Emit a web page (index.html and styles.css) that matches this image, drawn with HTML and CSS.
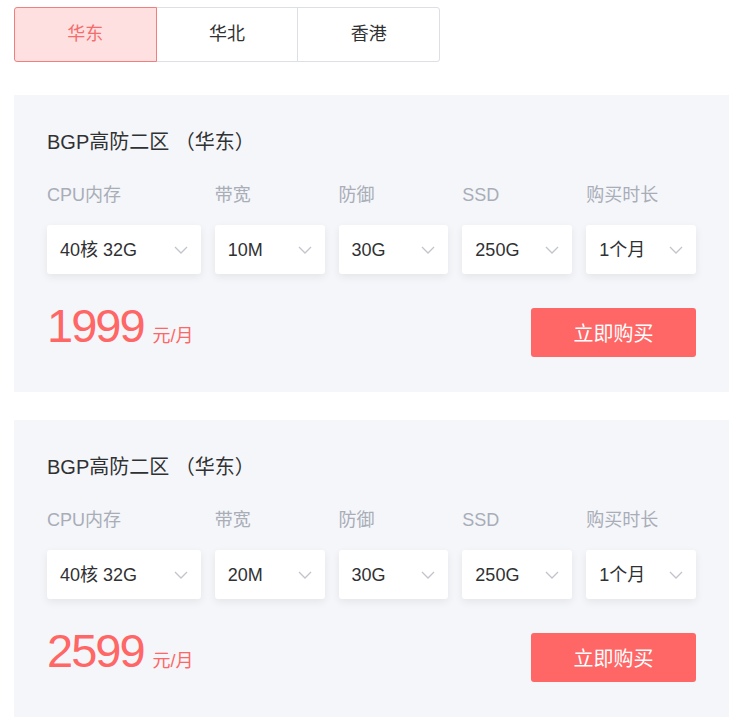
FILE: index.html
```html
<!DOCTYPE html>
<html lang="zh-CN">
<head>
  <meta charset="UTF-8">
  <meta name="viewport" content="width=device-width, initial-scale=1.0">
  <title>BGP高防</title>
  <link rel="stylesheet" href="styles.css">
</head>
<body>
  <div class="page">
    <!-- Region tabs -->
    <div class="tabs">
      <div class="tab active">华东</div>
      <div class="tab">华北</div>
      <div class="tab">香港</div>
    </div>

    <div class="card">
      <h2 class="card-title">BGP高防二区 （华东）</h2>
      <div class="options">
        <div class="option wide">
          <div class="option-label">CPU内存</div>
          <div class="select"><span>40核 32G</span><svg class="arrow" viewBox="0 0 16 16"><polyline points="2,5 8,11 14,5"/></svg></div>
        </div>
        <div class="option">
          <div class="option-label">带宽</div>
          <div class="select"><span>10M</span><svg class="arrow" viewBox="0 0 16 16"><polyline points="2,5 8,11 14,5"/></svg></div>
        </div>
        <div class="option">
          <div class="option-label">防御</div>
          <div class="select"><span>30G</span><svg class="arrow" viewBox="0 0 16 16"><polyline points="2,5 8,11 14,5"/></svg></div>
        </div>
        <div class="option">
          <div class="option-label">SSD</div>
          <div class="select"><span>250G</span><svg class="arrow" viewBox="0 0 16 16"><polyline points="2,5 8,11 14,5"/></svg></div>
        </div>
        <div class="option">
          <div class="option-label">购买时长</div>
          <div class="select"><span>1个月</span><svg class="arrow" viewBox="0 0 16 16"><polyline points="2,5 8,11 14,5"/></svg></div>
        </div>
      </div>
      <div class="card-footer">
        <div class="price"><span class="amount">1999</span><span class="unit">元/月</span></div>
        <button class="buy-btn">立即购买</button>
      </div>
    </div>

    <div class="card">
      <h2 class="card-title">BGP高防二区 （华东）</h2>
      <div class="options">
        <div class="option wide">
          <div class="option-label">CPU内存</div>
          <div class="select"><span>40核 32G</span><svg class="arrow" viewBox="0 0 16 16"><polyline points="2,5 8,11 14,5"/></svg></div>
        </div>
        <div class="option">
          <div class="option-label">带宽</div>
          <div class="select"><span>20M</span><svg class="arrow" viewBox="0 0 16 16"><polyline points="2,5 8,11 14,5"/></svg></div>
        </div>
        <div class="option">
          <div class="option-label">防御</div>
          <div class="select"><span>30G</span><svg class="arrow" viewBox="0 0 16 16"><polyline points="2,5 8,11 14,5"/></svg></div>
        </div>
        <div class="option">
          <div class="option-label">SSD</div>
          <div class="select"><span>250G</span><svg class="arrow" viewBox="0 0 16 16"><polyline points="2,5 8,11 14,5"/></svg></div>
        </div>
        <div class="option">
          <div class="option-label">购买时长</div>
          <div class="select"><span>1个月</span><svg class="arrow" viewBox="0 0 16 16"><polyline points="2,5 8,11 14,5"/></svg></div>
        </div>
      </div>
      <div class="card-footer">
        <div class="price"><span class="amount">2599</span><span class="unit">元/月</span></div>
        <button class="buy-btn">立即购买</button>
      </div>
    </div>
  </div>
</body>
</html>
```

FILE: styles.css
```css
/* General Styles */
* {
  box-sizing: border-box;
  margin: 0;
  padding: 0;
}

body {
  font-family: "Liberation Sans", "Noto Sans CJK SC", sans-serif;
  background-color: #fff;
  color: #303133;
}

.page {
  padding: 7px 12px 0 14px;
}

/* Tabs */
.tabs {
  display: flex;
  width: 426px;
}

.tab {
  flex: 1;
  height: 55px;
  display: flex;
  align-items: center;
  justify-content: center;
  font-size: 18px;
  line-height: 20px;
  padding-bottom: 2px;
  color: #303133;
  background: #fff;
  border: 1px solid #dcdfe6;
  margin-left: -1px;
}

.tab:first-child {
  margin-left: 0;
  border-radius: 3px 0 0 3px;
}

.tab:last-child {
  border-radius: 0 3px 3px 0;
}

.tab.active {
  background: #fee0e0;
  border-color: #f08080;
  color: #f56c6c;
  position: relative;
  z-index: 1;
}

/* Cards */
.card {
  background: #f5f6f9;
  margin-top: 33px;
  padding: 35px 33px 35px;
}

.card + .card {
  margin-top: 28px;
}

.card-title {
  font-size: 20px;
  line-height: 24px;
  font-weight: normal;
  color: #303133;
}

.options {
  display: flex;
  gap: 14px;
  margin-top: 29px;
}

.option {
  width: 110px;
}

.option.wide {
  width: 154px;
}

.option-label {
  font-size: 18px;
  line-height: 24px;
  color: #a8adb8;
}

.select {
  margin-top: 18px;
  height: 49px;
  background: #fff;
  border-radius: 3px;
  box-shadow: 0 3px 8px rgba(0, 0, 0, 0.07);
  display: flex;
  align-items: center;
  justify-content: space-between;
  padding: 0 12px 0 13px;
  font-size: 18px;
  line-height: 20px;
  color: #303133;
}

.arrow {
  width: 16px;
  height: 16px;
  fill: none;
  stroke: #c0c4cc;
  stroke-width: 1.3;
}

.card-footer {
  display: flex;
  justify-content: space-between;
  align-items: flex-start;
  margin-top: 34px;
}

.price {
  color: #f66;
  line-height: 1;
  margin-top: -6px;
}

.price .amount {
  font-size: 47px;
  letter-spacing: -2px;
}

.price .unit {
  font-size: 18px;
  margin-left: 9px;
}

.buy-btn {
  width: 165px;
  height: 49px;
  border: none;
  border-radius: 3px;
  background: #ff6666;
  color: #fff;
  font-family: "Liberation Sans", "Noto Sans CJK SC", sans-serif;
  font-size: 20px;
  cursor: pointer;
}
```
